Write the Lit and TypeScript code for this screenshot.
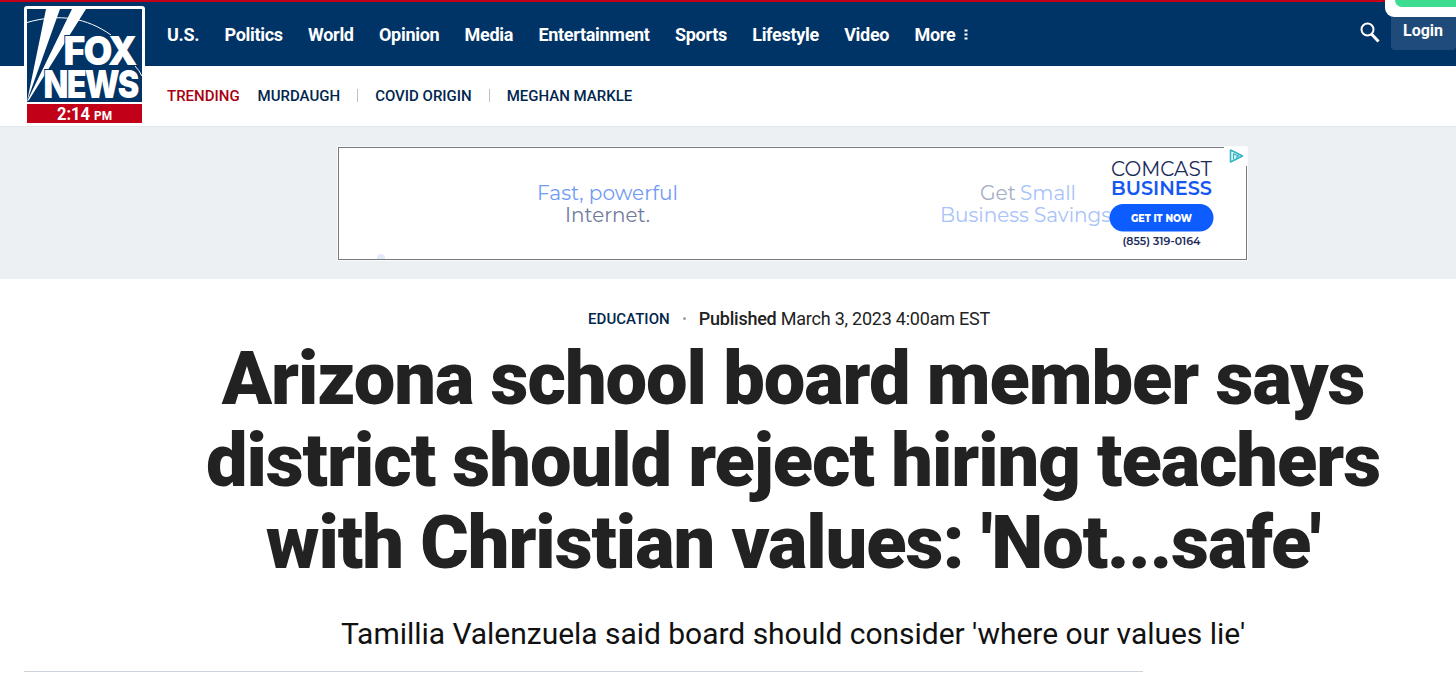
import {LitElement, html, css} from 'lit';
import {customElement, property} from 'lit/decorators.js';

@customElement('fox-logo')
export class FoxLogo extends LitElement {
    @property({type: String})
    time = '2:14';

    static override styles = css`
      :host {
        display: block;
        width: 121px;
        height: 118px;
      }

      svg {
        display: block;
      }

      .word {
        font-family: 'Inter', sans-serif;
        font-weight: 900;
        letter-spacing: -2px;
        fill: #fff;
        stroke: #003366;
        stroke-width: 2;
        paint-order: stroke;
      }

      .time {
        font-family: 'Roboto', sans-serif;
        font-weight: 700;
        fill: #fff;
      }
    `;

    override render() {
        return html`
            <svg width="121" height="118" viewBox="0 0 121 118">
                <rect width="121" height="118" rx="3" fill="#fff"></rect>
                <rect x="3" y="3" width="115" height="93" fill="#003366"></rect>
                <path d="M3 16.5C36 7 63 12 87 29M111 60Q115 64 118 70" fill="none" stroke="#fff" stroke-width="1"></path>
                <path d="M22 3H36L4.500 91L3 95.500ZM48 3H62L5 94L3 95.500Z" fill="#fff"></path>
                <text class="word" x="39.500" y="59" font-size="39.500" textLength="72" lengthAdjust="spacingAndGlyphs">FOX</text>
                <text class="word" x="19.500" y="91.500" font-size="38" textLength="94" lengthAdjust="spacingAndGlyphs">NEWS</text>
                <rect x="3" y="98" width="115" height="19" fill="#c20017"></rect>
                <text class="time" x="33" y="114" font-size="18" textLength="33" lengthAdjust="spacingAndGlyphs">${this.time}</text>
                <text class="time" x="70" y="114" font-size="12" textLength="18" lengthAdjust="spacingAndGlyphs">PM</text>
            </svg>
        `;
    }
}

@customElement('comcast-ad')
export class ComcastAd extends LitElement {
    static override styles = css`
      :host {
        display: flex;
        position: relative;
        box-sizing: border-box;
        width: 909px;
        height: 113px;
        border: 1px solid #77797c;
        outline: 1px solid #fafbfc;
        background: #fff;
      }

      svg {
        display: block;
      }

      .copy,
      .brand,
      .small {
        font-family: 'Montserrat', 'Lato', sans-serif;
      }

      .copy {
        font-size: 20px;
      }

      .brand {
        font-size: 19.5px;
      }

      .small {
        font-size: 11px;
      }

      .choices {
        position: absolute;
        top: -1px;
        right: -1px;
        background: #fff;
      }
    `;

    override render() {
        return html`
            <svg width="907" height="111" viewBox="339 148 907 111">
                <g class="copy">
                    <text x="537" y="199.500" fill="#709bf5" textLength="141" lengthAdjust="spacingAndGlyphs">Fast, powerful</text>
                    <text x="565" y="221.500" fill="#707b9b" textLength="85" lengthAdjust="spacingAndGlyphs">Internet.</text>
                    <text x="980" y="199.500" fill="#a5adc4" textLength="36" lengthAdjust="spacingAndGlyphs">Get</text>
                    <text x="1020" y="199.500" fill="#a8c2fa" textLength="56" lengthAdjust="spacingAndGlyphs">Small</text>
                    <text x="940" y="221.500" fill="#a8c2fa" textLength="171" lengthAdjust="spacingAndGlyphs">Business Savings</text>
                </g>
                <circle cx="381" cy="258" r="4" fill="#e3eafb"></circle>
                <g class="brand">
                    <text x="1111" y="175.500" font-size="20" fill="#1c2b5a" textLength="101" lengthAdjust="spacingAndGlyphs">COMCAST</text>
                    <text x="1111" y="194.500" font-weight="600" fill="#1557f2" textLength="101" lengthAdjust="spacingAndGlyphs">BUSINESS</text>
                </g>
                <rect x="1109.500" y="204" width="104" height="27.500" rx="13.750" fill="#0d5cff"></rect>
                <g class="small">
                    <text x="1131" y="221.500" font-weight="800" fill="#fff" textLength="61" lengthAdjust="spacingAndGlyphs">GET IT NOW</text>
                    <text x="1122.500" y="244.500" font-weight="600" fill="#1c2b5a" textLength="78" lengthAdjust="spacingAndGlyphs">(855) 319-0164</text>
                </g>
            </svg>
            <svg class="choices" width="23" height="19" viewBox="0 0 23 19">
                <path d="M6.500 3V15L18.500 9Z" fill="#e9f9fa" stroke="#2eb5c4" stroke-width="1.500" stroke-linejoin="round"></path>
                <path d="M9.500 12.500V7L14.500 9L12 10.500" fill="none" stroke="#2eb5c4" stroke-width="1.200"></path>
            </svg>
        `;
    }
}

@customElement('app-root')
export class AppRoot extends LitElement {
    sections = ['U.S.', 'Politics', 'World', 'Opinion', 'Media', 'Entertainment', 'Sports', 'Lifestyle', 'Video'];

    topics = ['MURDAUGH', 'COVID ORIGIN', 'MEGHAN MARKLE'];

    static override styles = css`
      :host {
        display: block;
        position: relative;
        height: 675px;
        overflow: hidden;
        background: #fff;
        font-family: 'Roboto', sans-serif;
        color: #222;
      }

      .logo {
        position: absolute;
        top: 6px;
        left: 24px;
      }

      .navbar {
        display: flex;
        align-items: center;
        box-sizing: border-box;
        height: 66px;
        padding-left: 167px;
        border-top: 2px solid #c20017;
        background: #003366;
        color: #fff;
      }

      .sections {
        display: flex;
        flex: 1;
        gap: 25.3px;
        font-size: 18px;
        font-weight: 700;
        letter-spacing: -0.3px;
        white-space: nowrap;
      }

      .more {
        display: flex;
        align-items: center;
        gap: 9px;
      }

      .more svg {
        margin-top: 2px;
      }

      .search {
        margin: -3px 11px 0 0;
      }

      .login {
        box-sizing: border-box;
        align-self: flex-start;
        width: 65px;
        height: 48px;
        padding: 18px 0 0 12px;
        border-radius: 4px;
        background: #1f4b7a;
        font-size: 16px;
        font-weight: 700;
        line-height: 21px;
      }

      .popup {
        position: absolute;
        top: 0;
        right: 0;
        box-sizing: border-box;
        width: 71px;
        height: 17px;
        padding-left: 10px;
        border-bottom-left-radius: 9px;
        background: #fff;
      }

      .popup-bar {
        height: 7px;
        border-bottom-left-radius: 8px;
        background: #3ddc91;
      }

      .trending {
        display: flex;
        align-items: center;
        box-sizing: border-box;
        height: 61px;
        padding-left: 167px;
        border-bottom: 1px solid #dfe6ec;
        font-size: 15px;
        font-weight: 500;
        color: #00264d;
        white-space: nowrap;
      }

      .trending-label {
        margin-right: 18px;
        color: #a8000f;
      }

      .topic + .topic::before {
        content: '';
        display: inline-block;
        width: 1px;
        height: 13px;
        margin: 0 17px;
        background: #b9c3cf;
        vertical-align: -1px;
      }

      .banner {
        box-sizing: border-box;
        height: 152px;
        padding: 20px 0 0 338px;
        background: #ecf0f3;
      }

      .article {
        display: flex;
        flex-direction: column;
        align-items: center;
        width: 1170px;
        padding: 28px 0 0 208px;
      }

      .meta {
        display: flex;
        align-items: center;
        height: 22px;
        margin-right: 8px;
        font-size: 18px;
        letter-spacing: -0.23px;
        white-space: nowrap;
      }

      .category {
        margin-top: 2px;
        font-size: 15px;
        font-weight: 500;
        letter-spacing: 0.05px;
        color: #00264d;
      }

      .dot {
        width: 3px;
        height: 3px;
        margin: 0 13px;
        border-radius: 50%;
        background: #9aa3ad;
      }

      .published {
        font-weight: 500;
      }

      .headline {
        margin: 9px 0 0;
        font-size: 74px;
        font-weight: 900;
        line-height: 82px;
        letter-spacing: -1.07px;
        text-align: center;
        white-space: nowrap;
      }

      .subhead {
        margin: 30px 0 0;
        font-size: 30px;
        font-weight: 400;
        line-height: 40px;
        letter-spacing: -0.03px;
        color: #111;
        white-space: nowrap;
      }

      .divider {
        width: 1119px;
        height: 1px;
        margin: 17px 0 0 24px;
        background: #ccd3da;
      }
    `;

    override render() {
        return html`
            <header>
                <nav class="navbar">
                    <div class="sections">
                        ${this.sections.map((name) => html`<span>${name}</span>`)}
                        <span class="more">More
                            <svg width="4" height="12" viewBox="0 0 4 12" fill="#fff">
                                <rect x="0.500" y="0.500" width="3" height="2"></rect>
                                <rect x="0.500" y="4.500" width="3" height="2"></rect>
                                <rect x="0.500" y="8.500" width="3" height="2"></rect>
                            </svg>
                        </span>
                    </div>
                    <svg class="search" width="20" height="21" viewBox="0 0 20 21" fill="none" stroke="#fff">
                        <circle cx="7.500" cy="7.500" r="6" stroke-width="2"></circle>
                        <path d="M11.500 12L18.500 19.500" stroke-width="3"></path>
                    </svg>
                    <span class="login">Login</span>
                </nav>
                <div class="trending">
                    <span class="trending-label">TRENDING</span>
                    ${this.topics.map((topic) => html`<span class="topic">${topic}</span>`)}
                </div>
            </header>
            <fox-logo class="logo"></fox-logo>
            <div class="popup"><div class="popup-bar"></div></div>
            <div class="banner"><comcast-ad></comcast-ad></div>
            <main class="article">
                <div class="meta">
                    <span class="category">EDUCATION</span>
                    <span class="dot"></span>
                    <span><span class="published">Published</span> March 3, 2023 4:00am EST</span>
                </div>
                <h1 class="headline">
                    Arizona school board member says<br>
                    district should reject hiring teachers<br>
                    with Christian values: 'Not...safe'
                </h1>
                <h2 class="subhead">Tamillia Valenzuela said board should consider 'where our values lie'</h2>
            </main>
            <div class="divider"></div>
        `;
    }
}

declare global {
    interface HTMLElementTagNameMap {
        'fox-logo': FoxLogo;
        'comcast-ad': ComcastAd;
        'app-root': AppRoot;
    }
}
